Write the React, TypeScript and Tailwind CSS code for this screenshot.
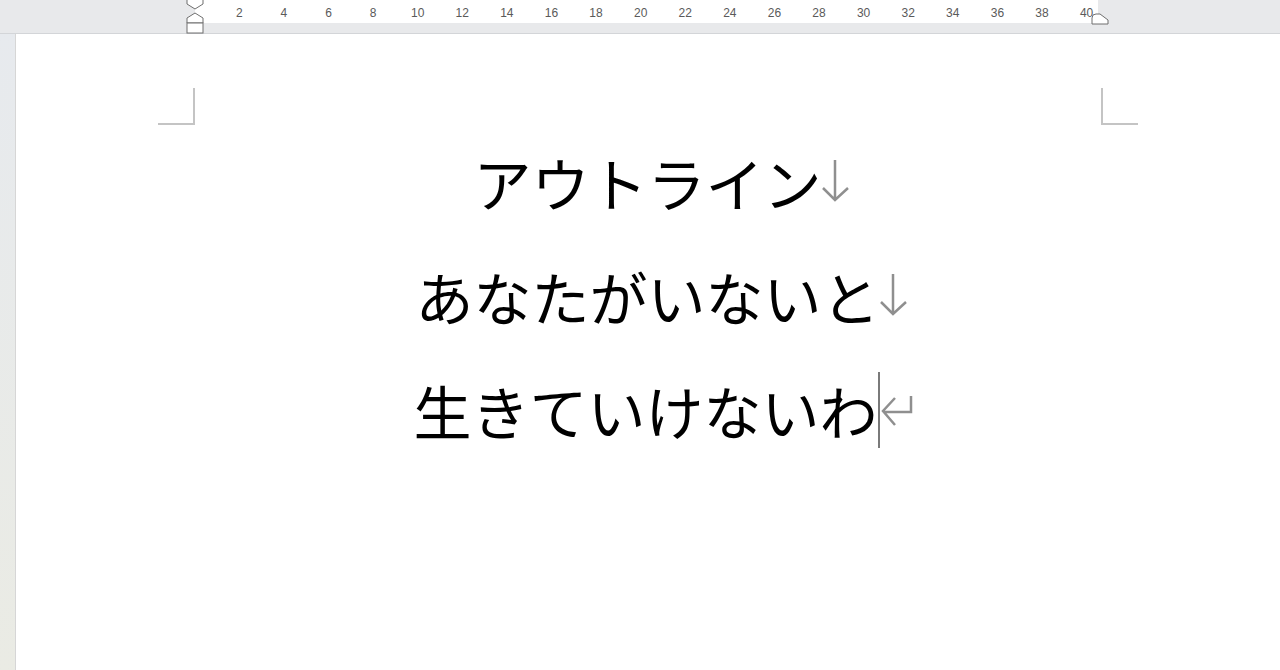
import React from "react";

const ticks = [2, 4, 6, 8, 10, 12, 14, 16, 18, 20, 22, 24, 26, 28, 30, 32, 34, 36, 38, 40];

function DownMark() {
  return (
    <svg width="32" height="56" viewBox="0 0 32 56" className="inline-block align-middle">
      <path d="M13 6 V46 M1 34 L13 46 L26 34" fill="none" stroke="#8f8f8f" strokeWidth="2.5" />
    </svg>
  );
}

function ReturnMark() {
  return (
    <svg width="34" height="56" viewBox="0 0 34 56" className="inline-block align-middle">
      <path d="M31 14 V30 H4 M15 16 L3 29 L15 43" fill="none" stroke="#8f8f8f" strokeWidth="2.5" />
    </svg>
  );
}

function Ruler() {
  return (
    <div className="relative h-[34px] bg-[#e8e9eb] border-b border-[#d3d5d8] flex items-start">
      <div className="w-[195px] shrink-0" />
      <div className="w-[903px] h-[23px] bg-white flex pl-[22px]">
        {ticks.map((t) => (
          <div key={t} className="w-[44.6px] shrink-0 text-center text-[12px] leading-[26px] text-[#5a5a5a]">
            {t}
          </div>
        ))}
      </div>
      {/* indent markers */}
      <svg className="absolute left-[186px] top-0" width="18" height="34" viewBox="0 0 18 34">
        <path d="M1 0 V4 L9 9 L17 4 V0" fill="#fff" stroke="#6f6f6f" strokeWidth="1" />
        <path d="M1 23 V18 L9 13 L17 18 V23 Z" fill="#fff" stroke="#6f6f6f" strokeWidth="1" />
        <rect x="1" y="23" width="16" height="10" fill="#fff" stroke="#6f6f6f" strokeWidth="1" />
      </svg>
      <svg className="absolute left-[1091px] top-0" width="18" height="34" viewBox="0 0 18 34">
        <path d="M1 24 V18 Q1 14 5 14 H9 L17 20 V24 Z" fill="#fff" stroke="#6f6f6f" strokeWidth="1" />
      </svg>
    </div>
  );
}

export default function App() {
  return (
    <div className="w-[1280px] h-[670px] overflow-hidden bg-white flex flex-col" style={{ fontFamily: '"Liberation Sans", sans-serif' }}>
      <Ruler />
      <div className="flex flex-1">
        <div className="w-[16px] shrink-0 bg-gradient-to-b from-[#e7eaee] to-[#eaebe4] border-r border-[#d6d6d6]" />
        <div className="flex-1 flex flex-col">
          <div className="flex justify-between px-[142px] pt-[54px]">
            <div className="w-[37px] h-[37px] border-r-2 border-b-2 border-[#c4c4c4]" />
            <div className="w-[37px] h-[37px] border-l-2 border-b-2 border-[#c4c4c4]" />
          </div>
          <div
            className="flex flex-col items-center pl-[31px] text-[58px] leading-[114px] text-black"
            style={{ fontFamily: '"Noto Sans CJK JP", sans-serif' }}
          >
            <div className="flex items-center">
              <span>アウトライン</span>
              <DownMark />
            </div>
            <div className="flex items-center">
              <span>あなたがいないと</span>
              <DownMark />
            </div>
            <div className="flex items-center">
              <span>生きていけないわ</span>
              <span className="inline-block w-[2px] h-[76px] bg-[#7a7a7a]" />
              <ReturnMark />
            </div>
          </div>
        </div>
      </div>
    </div>
  );
}
